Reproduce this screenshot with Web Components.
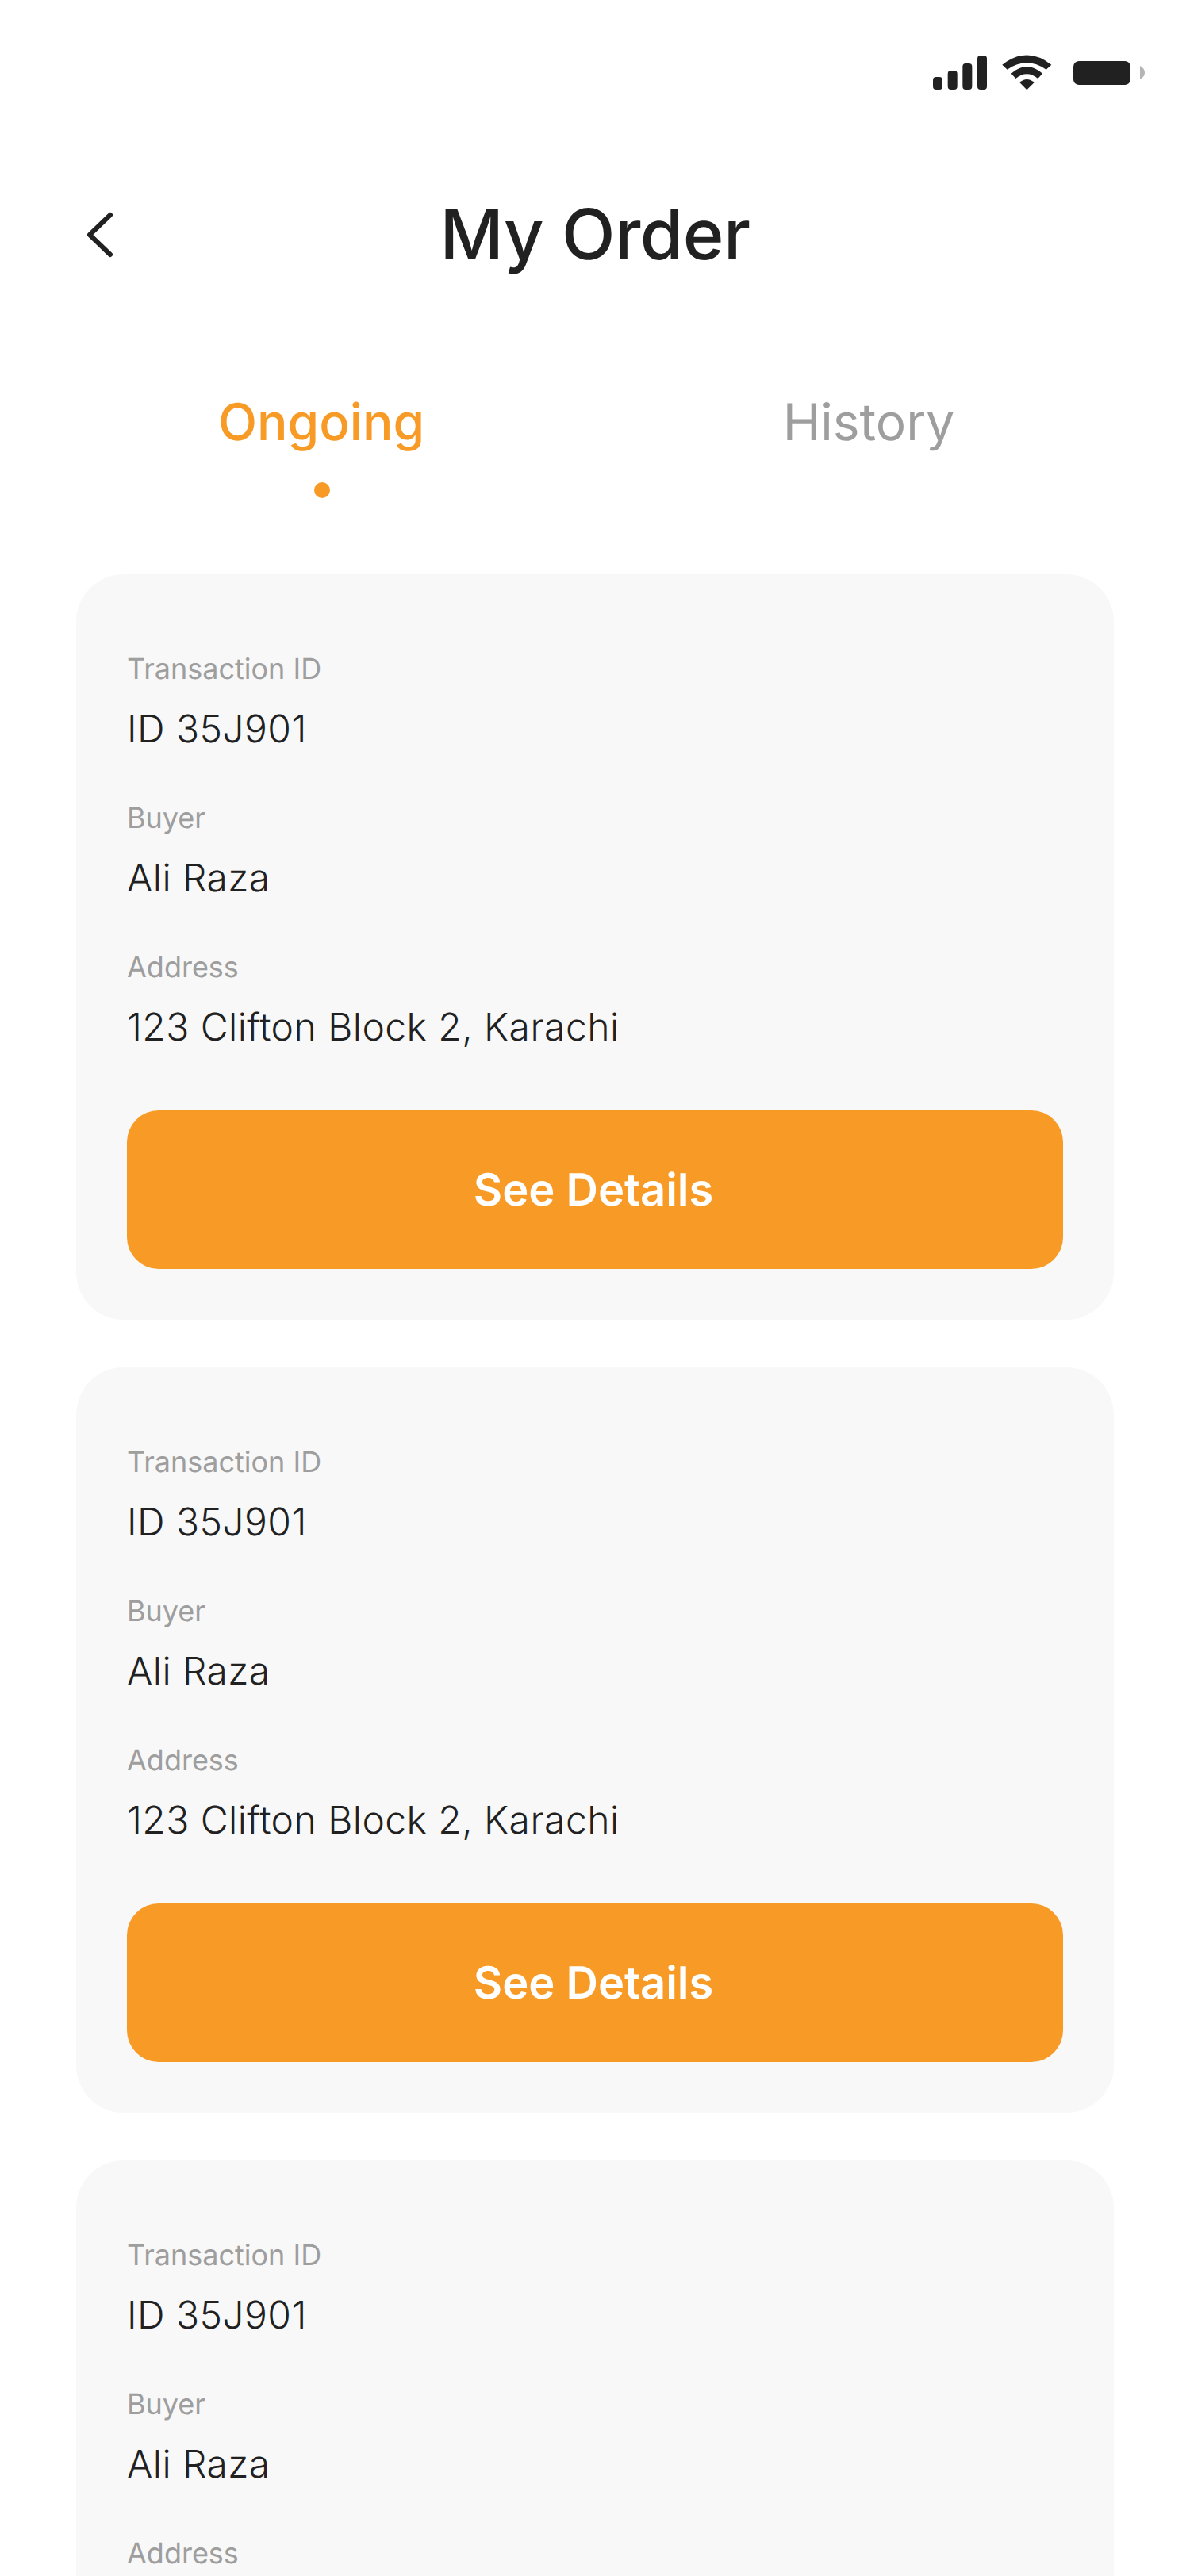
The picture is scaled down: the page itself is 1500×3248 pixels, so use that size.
<!DOCTYPE html>
<html lang="en">
<head>
<meta charset="utf-8">
<title>My Order</title>
<style>
  html, body { margin: 0; background: #fff; }
  body { height: 3248px; overflow: hidden; font-family: Inter, "Liberation Sans", sans-serif; text-rendering: geometricPrecision; }
</style>
</head>
<body>
<status-bar></status-bar>
<order-header>My Order</order-header>
<order-tabs>
  <tab-item active>Ongoing</tab-item>
  <tab-item>History</tab-item>
</order-tabs>
<order-list>
  <order-card>
    <order-field label="Transaction ID">ID 35J901</order-field>
    <order-field label="Buyer">Ali Raza</order-field>
    <order-field label="Address">123 Clifton Block 2, Karachi</order-field>
    <main-button slot="action">See Details</main-button>
  </order-card>
  <order-card>
    <order-field label="Transaction ID">ID 35J901</order-field>
    <order-field label="Buyer">Ali Raza</order-field>
    <order-field label="Address">123 Clifton Block 2, Karachi</order-field>
    <main-button slot="action">See Details</main-button>
  </order-card>
  <!-- last card runs off the bottom, only the rows still in the frame -->
  <order-card>
    <order-field label="Transaction ID">ID 35J901</order-field>
    <order-field label="Buyer">Ali Raza</order-field>
    <order-field label="Address"></order-field>
  </order-card>
</order-list>
<script>
// base class, each element only gives its markup
class ShadowEl extends HTMLElement {
  constructor(html) {
    super();
    const template = document.createElement('template');
    template.innerHTML = html;
    this.attachShadow({ mode: 'open' });
    this.shadowRoot.appendChild(template.content.cloneNode(true));
  }
}

class StatusBar extends ShadowEl {
  constructor() {
    super(`
      <style>
        :host { display: flex; justify-content: flex-end; box-sizing: border-box; height: 242px; padding: 69px 57px 0 0; }
        svg { display: block; }
      </style>
      <svg width="267" height="45" viewBox="0 0 267 45" fill="#212121">
        <rect x="0" y="28" width="12" height="16" rx="4"/>
        <rect x="18.67" y="20" width="12" height="24" rx="4"/>
        <rect x="37.33" y="11" width="12" height="33" rx="4"/>
        <rect x="56" y="1" width="12" height="43" rx="4"/>
        <path d="M87.3 12.7Q118.3-11.5 149.3 12.7L142.7 18.7Q118.3 2 93.7 18.7Z"/>
        <path d="M98.7 23.7Q118.3 6.5 138 23.7L132.3 30Q118.3 18.5 104.3 30Z"/>
        <path d="M109.3 35Q118.3 27 127.7 35L118.3 44.3Z"/>
        <rect x="177" y="8" width="72" height="30" rx="7"/>
        <path d="M261 14Q267 17 267 22.5Q267 28 261 31Z" fill="#b5b5b5"/>
      </svg>
    `);
  }
}

class OrderHeader extends ShadowEl {
  constructor() {
    super(`
      <style>
        :host { display: grid; grid-template-columns: 1fr auto 1fr; align-items: center; padding: 0 110px; height: 108px; }
        svg { display: block; }
        h1 { margin: 0; font: 500 88px/108px Inter, sans-serif; letter-spacing: -0.5px; color: #212121; }
      </style>
      <svg width="33" height="60" viewBox="0 0 33 60" fill="none" stroke="#212121" stroke-width="6" stroke-linecap="round" stroke-linejoin="round">
        <path d="M29 5L3 30L29 55"/>
      </svg>
      <h1><slot></slot></h1>
      <span></span>
    `);
  }
}

class OrderTabs extends ShadowEl {
  constructor() {
    super(`
      <style>
        :host { display: grid; grid-template-columns: 1fr 1fr; column-gap: 72px; padding: 0 96px; margin-top: 144px; }
      </style>
      <slot></slot>
    `);
  }
}

class TabItem extends ShadowEl {
  constructor() {
    super(`
      <style>
        :host { display: flex; flex-direction: column; align-items: center; font: 400 64px/78px Inter, sans-serif; color: #9e9e9e; }
        :host([active]) { color: #f89b26; font-weight: 500; }
        i { display: block; width: 20px; height: 20px; margin: 36px 0 0 2px; border-radius: 50%; }
        :host([active]) i { background: #f89b26; }
      </style>
      <span><slot></slot></span>
      <i></i>
    `);
  }
}

class OrderList extends ShadowEl {
  constructor() {
    super(`
      <style>
        :host { display: flex; flex-direction: column; gap: 60px; padding: 0 96px; margin-top: 96px; }
      </style>
      <slot></slot>
    `);
  }
}

class OrderCard extends ShadowEl {
  constructor() {
    super(`
      <style>
        :host { display: block; box-sizing: border-box; height: 940px; padding: 96px 64px 64px; background: #f8f8f8; border-radius: 60px; }
        .fields { display: flex; flex-direction: column; gap: 60px; margin-bottom: 76px; }
      </style>
      <div class="fields"><slot></slot></div>
      <slot name="action"></slot>
    `);
  }
}

class OrderField extends ShadowEl {
  constructor() {
    super(`
      <style>
        :host { display: flex; flex-direction: column; gap: 24px; }
        .label { font: 400 36px/46px Inter, sans-serif; color: #9e9e9e; }
        .value { min-height: 58px; font: 350 48px/58px Inter, sans-serif; letter-spacing: 0.44px; color: #212121; }
      </style>
      <div class="label"></div>
      <div class="value"><slot></slot></div>
    `);
    this.shadowRoot.querySelector('.label').textContent = this.getAttribute('label');
  }
}

class MainButton extends ShadowEl {
  constructor() {
    super(`
      <style>
        :host { display: flex; align-items: center; justify-content: center; box-sizing: border-box; height: 200px; padding-right: 4px; background: #f89b26; border-radius: 40px; color: #fff; font: 600 56px/68px Inter, sans-serif; }
      </style>
      <slot></slot>
    `);
  }
}

customElements.define('status-bar', StatusBar);
customElements.define('order-header', OrderHeader);
customElements.define('order-tabs', OrderTabs);
customElements.define('tab-item', TabItem);
customElements.define('order-list', OrderList);
customElements.define('order-card', OrderCard);
customElements.define('order-field', OrderField);
customElements.define('main-button', MainButton);
</script>
</body>
</html>
